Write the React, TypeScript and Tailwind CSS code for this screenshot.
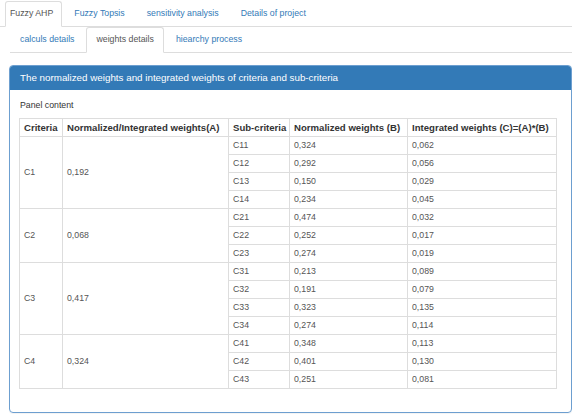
import { useState } from 'react';

interface SubRow {
  code: string;
  normalized: string;
  integrated: string;
}
interface Criterion {
  code: string;
  weight: string;
  subs: SubRow[];
}

const criteria: Criterion[] = [
  {
    code: 'C1',
    weight: '0,192',
    subs: [
      { code: 'C11', normalized: '0,324', integrated: '0,062' },
      { code: 'C12', normalized: '0,292', integrated: '0,056' },
      { code: 'C13', normalized: '0,150', integrated: '0,029' },
      { code: 'C14', normalized: '0,234', integrated: '0,045' },
    ],
  },
  {
    code: 'C2',
    weight: '0,068',
    subs: [
      { code: 'C21', normalized: '0,474', integrated: '0,032' },
      { code: 'C22', normalized: '0,252', integrated: '0,017' },
      { code: 'C23', normalized: '0,274', integrated: '0,019' },
    ],
  },
  {
    code: 'C3',
    weight: '0,417',
    subs: [
      { code: 'C31', normalized: '0,213', integrated: '0,089' },
      { code: 'C32', normalized: '0,191', integrated: '0,079' },
      { code: 'C33', normalized: '0,323', integrated: '0,135' },
      { code: 'C34', normalized: '0,274', integrated: '0,114' },
    ],
  },
  {
    code: 'C4',
    weight: '0,324',
    subs: [
      { code: 'C41', normalized: '0,348', integrated: '0,113' },
      { code: 'C42', normalized: '0,401', integrated: '0,130' },
      { code: 'C43', normalized: '0,251', integrated: '0,081' },
    ],
  },
];

const mainTabs = ['Fuzzy AHP', 'Fuzzy Topsis', 'sensitivity analysis', 'Details of project'];
const subTabs = ['calculs details', 'weights details', 'hiearchy process'];

const th =
  'border border-[#ddd] px-[4px] py-0 h-[18px] whitespace-nowrap text-left font-bold text-[9.6px] leading-[17px] text-[#333]';
const td = 'border border-[#ddd] px-[4px] py-0 h-[18px] text-[8.75px] leading-[17px] text-[#555]';

function App() {
  const [mainTab, setMainTab] = useState(0);
  const [subTab, setSubTab] = useState(1);

  return (
    <div className="w-[572px] h-[414px] overflow-hidden bg-white font-['Liberation_Sans',Arial,sans-serif] text-[8.75px] text-[#333]">
      <ul className="flex h-[27px] items-end border-b border-[#ddd] pl-[5px]">
        {mainTabs.map((t, i) => (
          <li key={t} className="-mb-px mr-[2px]">
            <button
              onClick={() => setMainTab(i)}
              className={
                i === mainTab
                  ? 'h-[26px] rounded-t-[3px] border border-[#ddd] border-b-white bg-white pl-[4px] pr-[8px] text-[#555]'
                  : 'h-[26px] rounded-t-[3px] border border-transparent px-[9px] text-[#337ab7]'
              }
            >
              {t}
            </button>
          </li>
        ))}
      </ul>

      <div className="pl-[10px]">
        <ul className="flex h-[26px] items-end border-b border-[#ddd]">
          {subTabs.map((t, i) => (
            <li key={t} className="-mb-px mr-[2px]">
              <button
                onClick={() => setSubTab(i)}
                className={
                  i === subTab
                    ? 'h-[26px] rounded-t-[3px] border border-[#ddd] border-b-white bg-white px-[9px] text-[#555]'
                    : 'h-[26px] rounded-t-[3px] border border-transparent px-[9px] text-[#337ab7]'
                }
              >
                {t}
              </button>
            </li>
          ))}
        </ul>
      </div>

      <div className="ml-[9px] mt-[12px] h-[348px] rounded-[4px] border border-[#6d9fd0] shadow-[0_1px_1px_rgba(0,0,0,0.05)]">
        <div className="flex h-[24px] items-center rounded-t-[3px] bg-[#337ab7] px-[10px] text-[9.8px] text-white">
          The normalized weights and integrated weights of criteria and sub-criteria
        </div>
        <div className="px-[9px] pt-[9px]">
          <p className="mb-[7px] pl-[1px] leading-[12px]">Panel content</p>
          <table className="table-fixed border-collapse w-[537px]">
            <colgroup>
              <col className="w-[43px]" />
              <col className="w-[166px]" />
              <col className="w-[61px]" />
              <col className="w-[118px]" />
              <col className="w-[149px]" />
            </colgroup>
            <thead>
              <tr>
                <th className={th}>Criteria</th>
                <th className={th}>Normalized/Integrated weights(A)</th>
                <th className={th}>Sub-criteria</th>
                <th className={th}>Normalized weights (B)</th>
                <th className={th}>Integrated weights (C)=(A)*(B)</th>
              </tr>
            </thead>
            <tbody>
              {criteria.map((c) =>
                c.subs.map((s, j) => (
                  <tr key={s.code}>
                    {j === 0 && (
                      <>
                        <td rowSpan={c.subs.length} className={td}>
                          {c.code}
                        </td>
                        <td rowSpan={c.subs.length} className={td}>
                          {c.weight}
                        </td>
                      </>
                    )}
                    <td className={td}>{s.code}</td>
                    <td className={td}>{s.normalized}</td>
                    <td className={td}>{s.integrated}</td>
                  </tr>
                ))
              )}
            </tbody>
          </table>
        </div>
      </div>
    </div>
  );
}

export default App;
